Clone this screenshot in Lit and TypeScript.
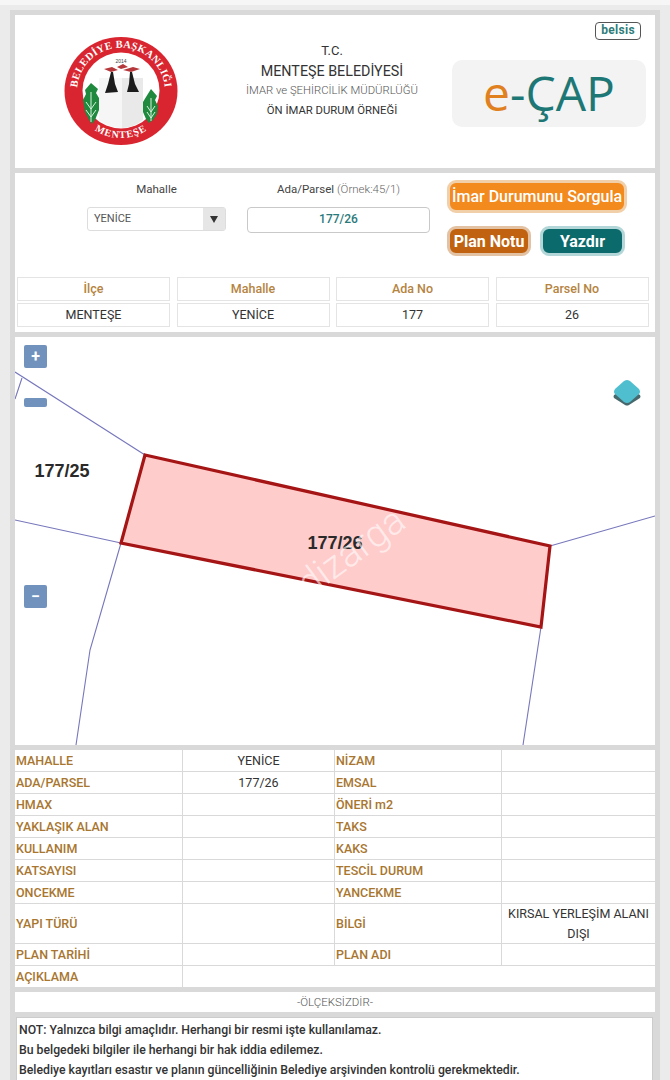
import { LitElement, css, html, svg } from "lit";
import { customElement } from "lit/decorators.js";

const RECORDS: [string, string, string, string][] = [
  ["MAHALLE", "YENİCE", "NİZAM", ""],
  ["ADA/PARSEL", "177/26", "EMSAL", ""],
  ["HMAX", "", "ÖNERİ m2", ""],
  ["YAKLAŞIK ALAN", "", "TAKS", ""],
  ["KULLANIM", "", "KAKS", ""],
  ["KATSAYISI", "", "TESCİL DURUM", ""],
  ["ONCEKME", "", "YANCEKME", ""],
  ["YAPI TÜRÜ", "", "BİLGİ", "KIRSAL YERLEŞİM ALANI DIŞI"],
  ["PLAN TARİHİ", "", "PLAN ADI", ""],
];

const logo = svg`
  <svg class="logo" viewBox="0 0 120 114" width="120" height="114">
    <defs>
      <path id="ringTop" d="M 21 78 A 44 44 0 1 1 99 78" />
      <path id="ringBottom" d="M 13 57 A 47 47 0 0 0 107 57" />
    </defs>
    <ellipse cx="60" cy="57" rx="56.5" ry="54" fill="#d9252f" />
    <ellipse cx="60" cy="56.5" rx="38.5" ry="38" fill="#fff" />
    <path d="M61 44 L82 44 L82 86 Q72 94 61 94 Z" fill="#e9e9e9" />
    <path d="M38 44 L61 44 L61 94 Q48 94 38 86 Z" fill="#f6f6f6" />
    <path d="M43 35 L51 33 L57 36 L50 38 Z M56 33 L62 30 L67 33 L60 35 Z M62 36 L72 33 L79 35 L70 38 Z" fill="#b5393c" />
    <path d="M50 38 L52 38 L54 50 L57 58 L44 59 L47 50 Z" fill="#1c1c1c" />
    <path d="M69 38 L71 38 L74 50 L78 58 L66 58 L68 50 Z" fill="#1c1c1c" />
    <path d="M30 49 L37 55 L35 59 L38 64 L38 76 L34 86 L31 90 L28 86 L24 78 L22 66 L25 60 L24 56 Z" fill="#1f8a3e" />
    <path d="M90 55 L96 62 L94 66 L97 72 L96 80 L92 86 L88 89 L85 85 L82 78 L82 68 L85 63 Z" fill="#1f8a3e" />
    <path d="M30 58 V88 M25 68 L30 75 L35 68 M25 76 L30 83 L35 76 M90 64 V87 M86 72 L90 78 L94 72 M86 78 L90 84 L94 78" stroke="#d9efdc" stroke-width="1" fill="none" />
    <text x="60" y="29" text-anchor="middle" class="logo-year">2014</text>
    <text class="logo-ring"><textPath href="#ringTop" startOffset="50%" text-anchor="middle">BELEDİYE BAŞKANLIĞI</textPath></text>
    <text class="logo-ring small"><textPath href="#ringBottom" startOffset="50%" text-anchor="middle">MENTEŞE</textPath></text>
  </svg>
`;

const parcelMap = svg`
  <svg class="map-canvas" viewBox="15 337 640 408" width="640" height="408">
    <g fill="none" stroke="#7676bc" stroke-width="1.1">
      <path d="M15 372 L145 455" />
      <path d="M22 378 L15 399" />
      <path d="M15 520 L121 543" />
      <path d="M121 543 L90 650 L76 745" />
      <path d="M550 546 L655 516" />
      <path d="M541 627 L523 745" />
    </g>
    <polygon points="145,455 550,546 541,627 121,543" fill="#ffcccc" stroke="#a51515" stroke-width="3.2" />
    <text x="62" y="477" text-anchor="middle" class="parcel-no">177/25</text>
    <text x="335" y="549" text-anchor="middle" class="parcel-no">177/26</text>
    <text x="309" y="598" transform="rotate(-36 309 598)" class="watermark">dizarga</text>
    <path d="M627 388 L640 395 Q641 397 640 398 L629 405 Q627 406 625 405 L614 398 Q613 397 614 395 Z" fill="#47696e" />
    <path d="M627 380 Q628 380 630 381 L639 389 Q641 392 639 394 L630 402 Q627 404 624 402 L615 394 Q613 392 615 389 L624 381 Q626 380 627 380 Z" fill="#4fbfcf" />
  </svg>
`;

@customElement("app-root")
export class AppRoot extends LitElement {
  render() {
    return html`
      <div class="sheet">
        <section class="panel header">
          <div class="logo-col">${logo}</div>
          <div class="title-col">
            <div class="title-line">T.C.</div>
            <div class="title-line big">MENTEŞE BELEDİYESİ</div>
            <div class="title-line thin">İMAR ve ŞEHİRCİLİK MÜDÜRLÜĞÜ</div>
            <div class="title-line small">ÖN İMAR DURUM ÖRNEĞİ</div>
          </div>
          <div class="brand-col">
            <div class="belsis">belsis</div>
            <div class="ecap"><span class="e">e</span>-ÇAP</div>
          </div>
        </section>

        <section class="panel query">
          <div class="controls">
            <div class="field select-field">
              <label>Mahalle</label>
              <div class="select">
                <span class="select-value">YENİCE</span>
                <span class="select-arrow"><i></i></span>
              </div>
            </div>
            <div class="field input-field">
              <label>Ada/Parsel <span class="hint">(Örnek:45/1)</span></label>
              <div class="input">177/26</div>
            </div>
            <div class="actions">
              <button class="btn orange">İmar Durumunu Sorgula</button>
              <div class="action-row">
                <button class="btn brown">Plan Notu</button>
                <button class="btn teal">Yazdır</button>
              </div>
            </div>
          </div>
          <div class="summary">
            ${["İlçe", "Mahalle", "Ada No", "Parsel No"].map((t) => html`<div class="sum head">${t}</div>`)}
            ${["MENTEŞE", "YENİCE", "177", "26"].map((t) => html`<div class="sum">${t}</div>`)}
          </div>
        </section>

        <section class="panel map">
          ${parcelMap}
          <button class="zoom plus">+</button>
          <button class="zoom bar"></button>
          <button class="zoom minus">−</button>
        </section>

        <section class="panel records">
          ${RECORDS.map(
            (r) => html`
              <div class="cell key">${r[0]}</div>
              <div class="cell val">${r[1]}</div>
              <div class="cell key">${r[2]}</div>
              <div class="cell val end">${r[3]}</div>
            `
          )}
          <div class="cell key last">AÇIKLAMA</div>
          <div class="cell val last wide"></div>
        </section>

        <section class="panel scale">-ÖLÇEKSİZDİR-</section>

        <section class="note">
          <div>NOT: Yalnızca bilgi amaçlıdır. Herhangi bir resmi işte kullanılamaz.</div>
          <div>Bu belgedeki bilgiler ile herhangi bir hak iddia edilemez.</div>
          <div>Belediye kayıtları esastır ve planın güncelliğinin Belediye arşivinden kontrolü gerekmektedir.</div>
        </section>
      </div>
    `;
  }

  static styles = css`
    :host {
      display: block;
      height: 1080px;
      overflow: hidden;
      background: linear-gradient(#f6f6f6 5px, #ebebeb 5px);
      font-family: "Roboto", "Liberation Sans", sans-serif;
      color: #333;
    }

    * {
      box-sizing: border-box;
    }

    .sheet {
      width: 650px;
      margin-left: 10px;
      padding: 15px 5px 40px;
      background: linear-gradient(transparent 10px, #d9d9d9 10px);
      display: flex;
      flex-direction: column;
      gap: 5px;
    }

    .panel {
      background: #fff;
    }

    /* header */
    .header {
      height: 153px;
      display: flex;
    }
    .logo-col {
      width: 212px;
      padding: 19px 0 0 46px;
    }
    .logo {
      display: block;
    }
    .logo-year {
      font: 5px "Liberation Sans", sans-serif;
      fill: #444;
    }
    .logo-ring {
      font: bold 10.5px "Liberation Serif", serif;
      fill: #fff;
      letter-spacing: 0.3px;
    }
    .logo-ring.small {
      font-size: 10px;
      letter-spacing: 1px;
    }
    .title-col {
      width: 210px;
      padding-top: 26px;
      text-align: center;
    }
    .title-line {
      height: 20px;
      line-height: 20px;
      font-size: 13px;
      color: #333;
      white-space: nowrap;
    }
    .title-line.big {
      font-size: 14.3px;
    }
    .title-line.thin {
      font-size: 11.3px;
      font-weight: 300;
      color: #555;
    }
    .title-line.small {
      font-size: 11.3px;
    }
    .brand-col {
      flex: 1;
      padding: 7px 9px 0 0;
      display: flex;
      flex-direction: column;
      align-items: flex-end;
    }
    .belsis {
      width: 46px;
      height: 18px;
      margin-right: 5px;
      border: 1.5px solid #555;
      border-radius: 4px;
      font-size: 12px;
      font-weight: 700;
      line-height: 15px;
      text-align: center;
      letter-spacing: 0.3px;
      color: #2f7d7b;
    }
    .ecap {
      width: 194px;
      height: 67px;
      margin-top: 20px;
      border-radius: 10px;
      background: #f3f3f3;
      font-family: "Open Sans", sans-serif;
      font-size: 48px;
      font-weight: 500;
      line-height: 65px;
      text-align: center;
      color: #1d7775;
    }
    .ecap .e {
      color: #e0801f;
    }

    /* query */
    .query {
      height: 159px;
    }
    .controls {
      height: 104px;
      padding-left: 72px;
      display: flex;
    }
    .field {
      padding-top: 9px;
      text-align: center;
    }
    .field label {
      display: block;
      height: 25px;
      line-height: 14px;
      font-size: 11.5px;
      color: #444;
    }
    .hint {
      color: #666;
      font-weight: 300;
    }
    .select-field {
      width: 139px;
      margin-right: 21px;
    }
    .input-field {
      width: 183px;
      margin-right: 17px;
    }
    .select {
      height: 24px;
      display: flex;
      justify-content: space-between;
      border: 1px solid #ddd;
      border-radius: 3px;
      font-size: 11px;
      color: #555;
      line-height: 21px;
    }
    .select-value {
      padding-left: 6px;
    }
    .select-arrow {
      width: 22px;
      background: #e6e6e6;
      display: flex;
      align-items: center;
      justify-content: center;
    }
    .select-arrow i {
      width: 0;
      height: 0;
      border: 4.5px solid transparent;
      border-top: 7px solid #333;
      border-bottom: 0;
    }
    .input {
      height: 26px;
      border: 1.5px solid #c9c9c9;
      border-radius: 4px;
      font-size: 12px;
      font-weight: 500;
      line-height: 23px;
      color: #2a7a7c;
    }
    .actions {
      width: 181px;
      padding-top: 7px;
    }
    .action-row {
      display: flex;
      gap: 9px;
      margin-top: 13px;
    }
    .btn {
      display: block;
      padding: 0;
      border: 3px solid;
      border-radius: 9px;
      font-family: "Roboto", sans-serif;
      font-size: 16px;
      font-weight: 700;
      color: #fff;
      white-space: nowrap;
    }
    .btn.orange {
      width: 180px;
      height: 33px;
      background: #f28a1e;
      border-color: #f1cfa8;
      font-weight: 500;
    }
    .btn.brown {
      width: 84px;
      height: 30px;
      background: #c0620f;
      border-color: #e3c2a3;
    }
    .btn.teal {
      width: 85px;
      height: 30px;
      background: #0b6a6b;
      border-color: #b3d7d8;
    }
    .summary {
      display: grid;
      grid-template-columns: repeat(4, 153px);
      grid-auto-rows: 24px;
      column-gap: 6.5px;
      row-gap: 2px;
      padding-left: 2px;
    }
    .sum {
      border: 1px solid #e4e4e4;
      font-size: 12.5px;
      line-height: 21px;
      text-align: center;
      color: #333;
    }
    .sum.head {
      font-weight: 500;
      color: #b5843f;
    }

    /* map */
    .map {
      position: relative;
      height: 408px;
      overflow: hidden;
    }
    .map-canvas {
      display: block;
    }
    .parcel-no {
      font: bold 18px "Liberation Sans", sans-serif;
      fill: #2a2a2a;
    }
    .watermark {
      font: 300 38px "Roboto", sans-serif;
      fill: #fff;
      fill-opacity: 0.6;
    }
    .zoom {
      position: absolute;
      left: 9px;
      width: 23px;
      padding: 0;
      border: 0;
      border-radius: 2px;
      background: #7092bd;
      font: bold 16px/23px "Roboto", sans-serif;
      color: #fff;
    }
    .zoom.plus {
      top: 8px;
      height: 23px;
    }
    .zoom.bar {
      top: 61px;
      height: 9px;
    }
    .zoom.minus {
      top: 248px;
      height: 23px;
    }

    /* records */
    .records {
      height: 237px;
      display: grid;
      grid-template-columns: 168px 152px 167px 153px;
      grid-template-rows: repeat(7, 22px) 40px 22px 21px;
    }
    .cell {
      display: flex;
      align-items: center;
      border-bottom: 1.5px solid #d9d9d9;
      border-right: 1.5px solid #d9d9d9;
      font-size: 12.5px;
    }
    .cell.key {
      padding-left: 1px;
      font-weight: 500;
      color: #a8762f;
    }
    .cell.val {
      justify-content: center;
      text-align: center;
      line-height: 20px;
      color: #333;
    }
    .cell.end {
      border-right: 0;
      padding: 0 5px;
    }
    .cell.last {
      border-bottom: 0;
    }
    .cell.wide {
      grid-column: span 3;
      border-right: 0;
    }

    /* footer */
    .scale {
      height: 20px;
      font-size: 11.5px;
      font-weight: 300;
      line-height: 20px;
      text-align: center;
      color: #555;
    }
    .note {
      height: 100px;
      margin: 0 2px 0 1px;
      padding: 2px;
      border: 1px solid #ccc;
      background: #fff;
      font-size: 12.25px;
      font-weight: 500;
      line-height: 20px;
      color: #333;
    }
  `;
}
